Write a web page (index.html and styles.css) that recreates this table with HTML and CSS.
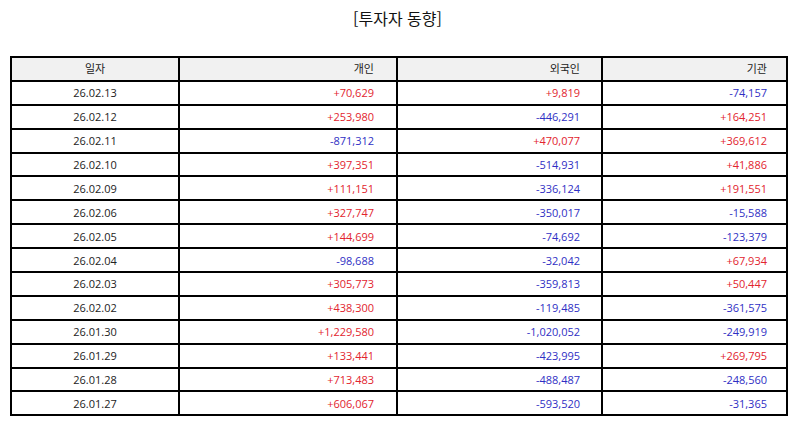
FILE: index.html
```html
<!DOCTYPE html>
<html lang="ko">
<head>
<meta charset="utf-8">
<title>투자자 동향</title>
<link rel="stylesheet" href="styles.css">
</head>
<body>
<div class="page">
  <h1 class="title">[투자자 동향]</h1>
  <table class="grid">
    <colgroup>
      <col class="c-date"><col class="c-ind"><col class="c-for"><col class="c-inst">
    </colgroup>
    <thead>
      <tr><th class="ctr">일자</th><th class="p-ind">개인</th><th class="p-for">외국인</th><th class="p-inst">기관</th></tr>
    </thead>
    <tbody>
      <tr><td class="ctr">26.02.13</td><td class="p-ind up">+70,629</td><td class="p-for up">+9,819</td><td class="p-inst dn">-74,157</td></tr>
      <tr><td class="ctr">26.02.12</td><td class="p-ind up">+253,980</td><td class="p-for dn">-446,291</td><td class="p-inst up">+164,251</td></tr>
      <tr><td class="ctr">26.02.11</td><td class="p-ind dn">-871,312</td><td class="p-for up">+470,077</td><td class="p-inst up">+369,612</td></tr>
      <tr><td class="ctr">26.02.10</td><td class="p-ind up">+397,351</td><td class="p-for dn">-514,931</td><td class="p-inst up">+41,886</td></tr>
      <tr><td class="ctr">26.02.09</td><td class="p-ind up">+111,151</td><td class="p-for dn">-336,124</td><td class="p-inst up">+191,551</td></tr>
      <tr><td class="ctr">26.02.06</td><td class="p-ind up">+327,747</td><td class="p-for dn">-350,017</td><td class="p-inst dn">-15,588</td></tr>
      <tr><td class="ctr">26.02.05</td><td class="p-ind up">+144,699</td><td class="p-for dn">-74,692</td><td class="p-inst dn">-123,379</td></tr>
      <tr><td class="ctr">26.02.04</td><td class="p-ind dn">-98,688</td><td class="p-for dn">-32,042</td><td class="p-inst up">+67,934</td></tr>
      <tr><td class="ctr">26.02.03</td><td class="p-ind up">+305,773</td><td class="p-for dn">-359,813</td><td class="p-inst up">+50,447</td></tr>
      <tr><td class="ctr">26.02.02</td><td class="p-ind up">+438,300</td><td class="p-for dn">-119,485</td><td class="p-inst dn">-361,575</td></tr>
      <tr><td class="ctr">26.01.30</td><td class="p-ind up">+1,229,580</td><td class="p-for dn">-1,020,052</td><td class="p-inst dn">-249,919</td></tr>
      <tr><td class="ctr">26.01.29</td><td class="p-ind up">+133,441</td><td class="p-for dn">-423,995</td><td class="p-inst up">+269,795</td></tr>
      <tr><td class="ctr">26.01.28</td><td class="p-ind up">+713,483</td><td class="p-for dn">-488,487</td><td class="p-inst dn">-248,560</td></tr>
      <tr><td class="ctr">26.01.27</td><td class="p-ind up">+606,067</td><td class="p-for dn">-593,520</td><td class="p-inst dn">-31,365</td></tr>
    </tbody>
  </table>
</div>
</body>
</html>
```

FILE: styles.css
```css
html, body {
  margin: 0;
  padding: 0;
  background: #ffffff;
}

.page {
  width: 794px;
  height: 425px;
  padding: 0 9px 0 10px;
  box-sizing: border-box;
  font-family: "Open Sans", "Noto Sans CJK KR", sans-serif;
  color: #222222;
}

.title {
  margin: 0;
  padding-top: 6px;
  height: 56px;
  box-sizing: border-box;
  font-family: "Noto Sans CJK KR", "Noto Sans", sans-serif;
  font-size: 16px;
  font-weight: 400;
  line-height: 24px;
  text-align: center;
  color: #111111;
}

.grid {
  width: 776px;
  table-layout: fixed;
  border-collapse: collapse;
  font-size: 11px;
  line-height: 1;
}

.c-date { width: 168px; }
.c-ind { width: 218px; }
.c-for { width: 205px; }
.c-inst { width: 185px; }

.grid th,
.grid td {
  height: 23.9px;
  padding: 0;
  border: 2px solid #000000;
  font-weight: 400;
  vertical-align: middle;
  white-space: nowrap;
  box-sizing: border-box;
}

.grid th {
  background: #f1f1f1;
  color: #222222;
  font-family: "Noto Sans CJK KR", "Noto Sans", sans-serif;
}

.ctr { text-align: center; }

.p-ind { text-align: right; padding-right: 22px !important; }
.p-for { text-align: right; padding-right: 21px !important; }
.p-inst { text-align: right; padding-right: 19px !important; }

.up { color: #e2242e; }
.dn { color: #2f2fc4; }
```
